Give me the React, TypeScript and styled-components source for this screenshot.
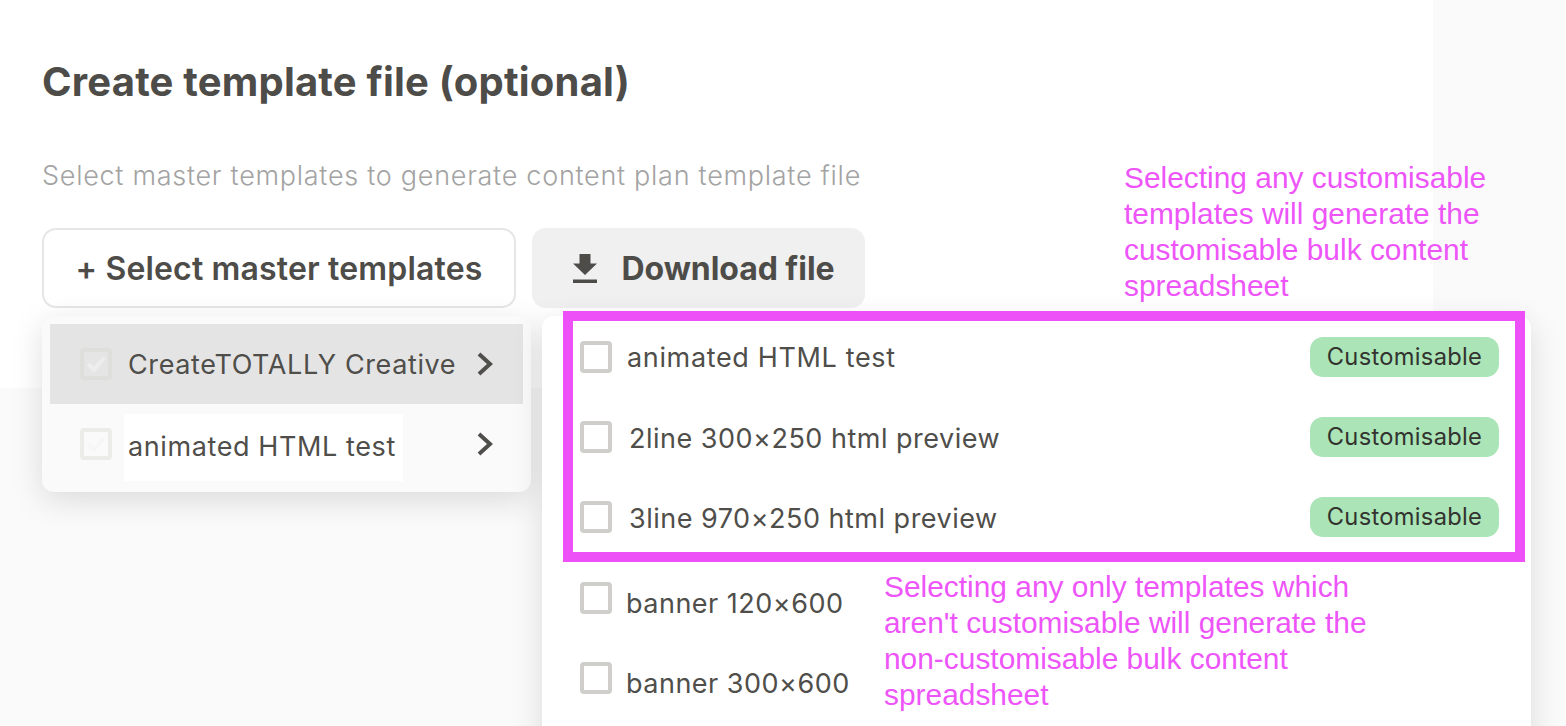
import React from "react";
import styled, { createGlobalStyle } from "styled-components";

const Global = createGlobalStyle`
  html, body { margin: 0; padding: 0; background: #fafafa; }
  body { font-family: Inter, "Liberation Sans", sans-serif; }
`;

const Page = styled.div`
  position: relative;
  width: 1566px;
  height: 726px;
  overflow: hidden;
  background: #fafafa;
`;

const Card = styled.section`
  width: 1433px;
  height: 388px;
  box-sizing: border-box;
  background: #fff;
  padding: 58px 42px 0;
`;

const Title = styled.h1`
  margin: 0;
  font-size: 40px;
  line-height: 48px;
  font-weight: 700;
  letter-spacing: 0.2px;
  color: #4d4c48;
`;

const Subtitle = styled.p`
  margin: 52px 0 0;
  font-size: 27px;
  line-height: 36px;
  font-weight: 300;
  letter-spacing: 0.72px;
  color: #a3a3a3;
  white-space: nowrap;
`;

const Actions = styled.div`
  display: flex;
  gap: 16px;
  margin-top: 34px;
`;

const OutlineButton = styled.button`
  width: 474px;
  height: 80px;
  box-sizing: border-box;
  border: 2px solid #e6e6e6;
  border-radius: 14px;
  background: #fff;
  font: 600 32px Inter, sans-serif;
  letter-spacing: 0.16px;
  color: #4d4c48;
`;

const FillButton = styled.button`
  width: 333px;
  height: 80px;
  box-sizing: border-box;
  padding: 0 0 0 11px;
  display: flex;
  align-items: center;
  justify-content: center;
  gap: 24px;
  border: 0;
  border-radius: 14px;
  background: #f0f0f0;
  font: 700 32px Inter, sans-serif;
  letter-spacing: -0.05px;
  color: #4d4c48;
`;

const LeftMenu = styled.div`
  position: absolute;
  left: 42px;
  top: 316px;
  width: 489px;
  height: 176px;
  box-sizing: border-box;
  padding: 8px;
  border-radius: 12px;
  background: #fafafa;
  box-shadow: 0 8px 32px rgba(0, 0, 0, 0.13);
`;

const LeftRow = styled.div<{ $active?: boolean }>`
  height: 80px;
  display: flex;
  align-items: center;
  padding: 0 29px 0 30px;
  background: ${(p) => (p.$active ? "#e4e4e4" : "transparent")};
`;

const LeftLabel = styled.span`
  flex: 1;
  display: flex;
  margin-left: 16px;
  font-size: 27px;
  letter-spacing: 0.6px;
  color: #4f4e4a;
  white-space: nowrap;
`;

const Highlight = styled.span`
  background: #fff;
  margin-left: -4px;
  padding: 16px 7px 18px 4px;
  line-height: 33px;
  transform: translateY(3px);
`;

const FadedBox = styled.span<{ $active?: boolean }>`
  width: 32px;
  height: 32px;
  box-sizing: border-box;
  flex: none;
  display: flex;
  align-items: center;
  justify-content: center;
  border: 4px solid ${(p) => (p.$active ? "#dededd" : "#ececeb")};
  border-radius: 4px;
  background: ${(p) => (p.$active ? "#e5e5e5" : "#fafafa")};
  color: ${(p) => (p.$active ? "#eeeeee" : "#f6f6f6")};
`;

const RightMenu = styled.div`
  position: absolute;
  left: 542px;
  top: 316px;
  width: 989px;
  height: 440px;
  box-sizing: border-box;
  padding-top: 1px;
  border-radius: 12px 12px 0 0;
  background: #fff;
  box-shadow: 0 8px 32px rgba(0, 0, 0, 0.13);
`;

const Row = styled.div<{ $offset?: number }>`
  height: 80px;
  display: flex;
  align-items: center;
  padding: 0 32px 0 38px;
  margin-top: ${(p) => p.$offset ?? 0}px;
`;

const Box = styled.span`
  width: 32px;
  height: 32px;
  box-sizing: border-box;
  flex: none;
  border: 4px solid #cfcecb;
  border-radius: 4px;
  background: #fff;
`;

const RowLabel = styled.span<{ $gap: number; $drop?: number; $tight?: boolean }>`
  flex: 1;
  margin-left: ${(p) => p.$gap}px;
  font-size: 27px;
  letter-spacing: ${(p) => (p.$tight ? 0.5 : 0.65)}px;
  color: #4f4e4a;
  white-space: nowrap;
  transform: translateY(${(p) => p.$drop ?? 0}px);
`;

const Badge = styled.span`
  width: 189px;
  height: 40px;
  box-sizing: border-box;
  padding-bottom: 2px;
  display: flex;
  align-items: center;
  justify-content: center;
  border-radius: 13px;
  background: #abe5b7;
  color: #33332f;
  font-size: 23.7px;
  letter-spacing: 0.3px;
`;

const Frame = styled.div`
  position: absolute;
  left: 563px;
  top: 311px;
  width: 962px;
  height: 251px;
  box-sizing: border-box;
  border: 10px solid #ee50f8;
  pointer-events: none;
`;

const Note = styled.div<{ $x: number; $y: number }>`
  position: absolute;
  left: ${(p) => p.$x}px;
  top: ${(p) => p.$y}px;
  font-family: "Liberation Sans", Arial, sans-serif;
  font-size: 29.9px;
  line-height: 36px;
  color: #ee55f8;
  white-space: pre;
`;

const Chevron = () => (
  <svg width="18" height="26" viewBox="0 0 18 26" fill="none">
    <path d="M3 3l11 10L3 23" stroke="#4f4e4a" strokeWidth="4" />
  </svg>
);

const Check = () => (
  <svg width="20" height="16" viewBox="0 0 20 16" fill="none">
    <path d="M2 8l6 5.500L18 2" stroke="currentColor" strokeWidth="4" />
  </svg>
);

const DownloadIcon = () => (
  <svg width="24" height="29" viewBox="0 0 24 29">
    <path d="M6.500 0h11v9.500H24L12 21 0 9.500h6.500zM0 25.500h24V29H0z" fill="#4d4c48" />
  </svg>
);

const items = [
  { name: "animated HTML test", gap: 15, drop: 0, tight: false },
  { name: "2line 300×250 html preview", gap: 17, drop: 1, tight: true },
  { name: "3line 970×250 html preview", gap: 17, drop: 1, tight: true },
];

export default function App() {
  return (
    <Page>
      <Global />
      <Card>
        <Title>Create template file (optional)</Title>
        <Subtitle>Select master templates to generate content plan template file</Subtitle>
        <Actions>
          <OutlineButton>+ Select master templates</OutlineButton>
          <FillButton>
            <DownloadIcon />
            Download file
          </FillButton>
        </Actions>
      </Card>
      <LeftMenu>
        <LeftRow $active>
          <FadedBox $active>
            <Check />
          </FadedBox>
          <LeftLabel>CreateTOTALLY Creative</LeftLabel>
          <Chevron />
        </LeftRow>
        <LeftRow>
          <FadedBox>
            <Check />
          </FadedBox>
          <LeftLabel>
            <Highlight>animated HTML test</Highlight>
          </LeftLabel>
          <Chevron />
        </LeftRow>
      </LeftMenu>
      <RightMenu>
        {items.map((i) => (
          <Row key={i.name}>
            <Box />
            <RowLabel $gap={i.gap} $drop={i.drop} $tight={i.tight}>{i.name}</RowLabel>
            <Badge>Customisable</Badge>
          </Row>
        ))}
        <Row $offset={1}>
          <Box />
          <RowLabel $gap={14} $drop={5} $tight>banner 120×600</RowLabel>
        </Row>
        <Row>
          <Box />
          <RowLabel $gap={14} $drop={5} $tight>banner 300×600</RowLabel>
        </Row>
      </RightMenu>
      <Frame />
      <Note $x={1124} $y={160}>{"Selecting any customisable\ntemplates will generate the\ncustomisable bulk content\nspreadsheet"}</Note>
      <Note $x={884} $y={569}>{"Selecting any only templates which\naren't customisable will generate the\nnon-customisable bulk content\nspreadsheet"}</Note>
    </Page>
  );
}
